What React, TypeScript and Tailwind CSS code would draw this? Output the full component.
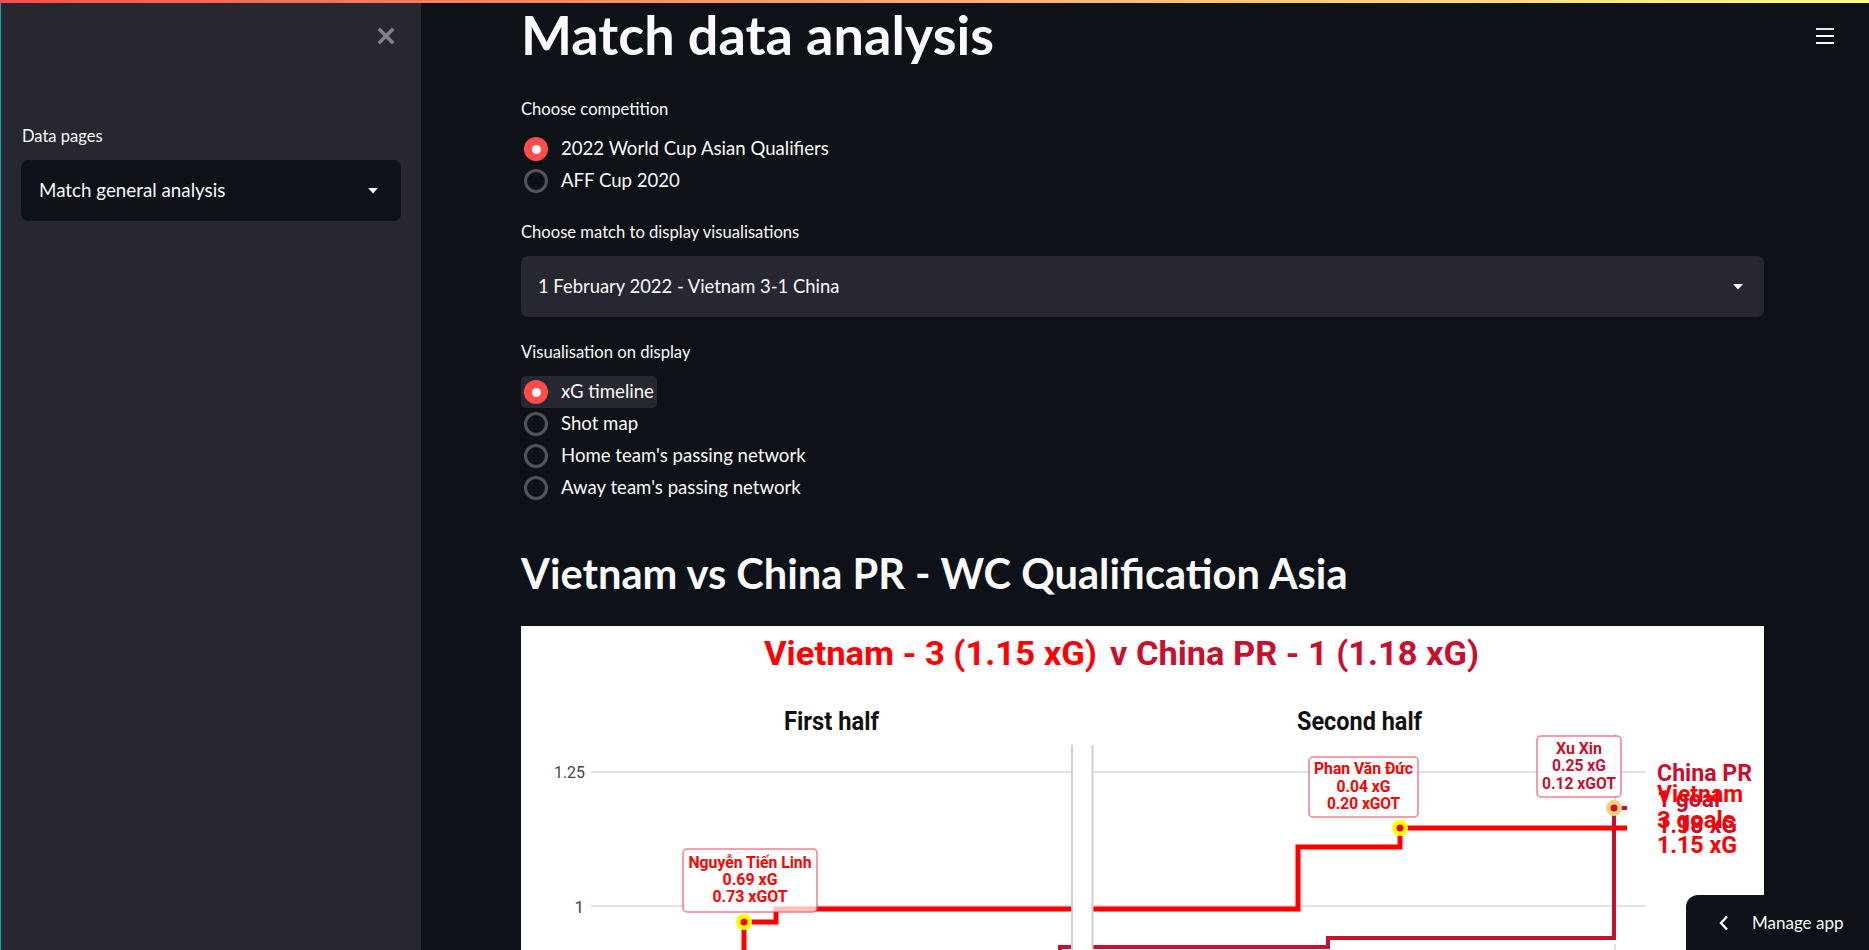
import React from "react";

function Caret() {
  return (
    <svg width="10" height="6" viewBox="0 0 10 6">
      <path d="M0 0 L10 0 L5 5.5 Z" fill="#fafafa" />
    </svg>
  );
}

function Radio({ label, checked = false, focused = false }: { label: string; checked?: boolean; focused?: boolean }) {
  return (
    <div className="h-8 flex items-center">
      <div className={focused ? "h-8 flex items-center pl-[3px] pr-[3px] rounded-[5px] bg-[#262730]" : "h-8 flex items-center pl-[3px] pr-[3px]"}>
        {checked ? (
          <span className="w-6 h-6 rounded-full bg-[#ff4b4b] flex items-center justify-center">
            <span className="w-[9px] h-[9px] rounded-full bg-white" />
          </span>
        ) : (
          <span className="w-6 h-6 rounded-full border-[3px] border-[#52545d]" />
        )}
        <span className="ml-[13px] text-[18.6px] text-[#fafafa]">{label}</span>
      </div>
    </div>
  );
}

function Chart() {
  const vn = "#ff0000";
  const cn = "#c8102e";
  const box = "rgba(235,40,60,0.6)";
  return (
    <div className="w-full h-[420px] bg-white">
      <svg width="1243" height="420" viewBox="0 0 1243 420" fontFamily="Roboto, sans-serif">
        <text x="243" y="39" fontSize="34" fontWeight="700" fill={vn} textLength="333" lengthAdjust="spacingAndGlyphs">Vietnam - 3 (1.15 xG)</text>
        <text x="589" y="39" fontSize="34" fontWeight="700" fill={cn} textLength="369" lengthAdjust="spacingAndGlyphs">v China PR - 1 (1.18 xG)</text>

        <text x="263" y="104" fontSize="25" fontWeight="700" fill="#111" textLength="95" lengthAdjust="spacingAndGlyphs">First half</text>
        <text x="776" y="104" fontSize="25" fontWeight="700" fill="#111" textLength="125" lengthAdjust="spacingAndGlyphs">Second half</text>

        <text x="64" y="152" fontSize="17" fill="#444" textAnchor="end" textLength="31" lengthAdjust="spacingAndGlyphs">1.25</text>
        <text x="63" y="287" fontSize="17" fill="#444" textAnchor="end">1</text>

        <line x1="70" y1="146" x2="1124" y2="146" stroke="#e2e2e2" strokeWidth="2" />
        <line x1="70" y1="280" x2="1124" y2="280" stroke="#e2e2e2" strokeWidth="2" />

        <line x1="1094" y1="108" x2="1094" y2="420" stroke="#dddddd" strokeWidth="2" strokeDasharray="6 4" />

        <path d="M539 420 L539 321 L807 321 L807 312 L1093 312 L1093 182 L1106 182" fill="none" stroke={cn} strokeWidth="4" />
        <path d="M223 420 L223 296 L255 296 L255 283 L777 283 L777 221 L879 221 L879 202 L1106 202" fill="none" stroke={vn} strokeWidth="5" />

        <rect x="552" y="119" width="19" height="301" fill="#ffffff" />
        <line x1="551" y1="119" x2="551" y2="420" stroke="#cfcfcf" strokeWidth="2" />
        <line x1="571.5" y1="119" x2="571.5" y2="420" stroke="#cfcfcf" strokeWidth="2" />

        <circle cx="223" cy="296" r="8" fill="#ffff00" />
        <circle cx="223" cy="296" r="3.5" fill={vn} />
        <circle cx="879" cy="202" r="8" fill="#ffff00" />
        <circle cx="879" cy="202" r="3.5" fill={vn} />
        <circle cx="1093" cy="182" r="8" fill="#f2d27a" />
        <circle cx="1093" cy="182" r="3.5" fill={cn} />

        <rect x="162" y="223" width="134" height="63" rx="4" fill="rgba(255,255,255,0.75)" stroke={box} strokeWidth="1.5" />
        <text x="229" y="242" fontSize="16" fontWeight="700" fill={vn} textAnchor="middle" textLength="123" lengthAdjust="spacingAndGlyphs">Nguyễn Tiến Linh</text>
        <text x="229" y="259" fontSize="16" fontWeight="700" fill={vn} textAnchor="middle" textLength="55" lengthAdjust="spacingAndGlyphs">0.69 xG</text>
        <text x="229" y="276" fontSize="16" fontWeight="700" fill={vn} textAnchor="middle" textLength="75" lengthAdjust="spacingAndGlyphs">0.73 xGOT</text>

        <rect x="788" y="131" width="109" height="60" rx="4" fill="rgba(255,255,255,0.75)" stroke={box} strokeWidth="1.5" />
        <text x="842.5" y="148" fontSize="16" fontWeight="700" fill={vn} textAnchor="middle" textLength="99" lengthAdjust="spacingAndGlyphs">Phan Văn Đức</text>
        <text x="842.5" y="166" fontSize="16" fontWeight="700" fill={vn} textAnchor="middle" textLength="54" lengthAdjust="spacingAndGlyphs">0.04 xG</text>
        <text x="842.5" y="183" fontSize="16" fontWeight="700" fill={vn} textAnchor="middle" textLength="73" lengthAdjust="spacingAndGlyphs">0.20 xGOT</text>

        <rect x="1016" y="110" width="84" height="61" rx="4" fill="rgba(255,255,255,0.75)" stroke={box} strokeWidth="1.5" />
        <text x="1058" y="128" fontSize="16" fontWeight="700" fill={cn} textAnchor="middle" textLength="46" lengthAdjust="spacingAndGlyphs">Xu Xin</text>
        <text x="1058" y="145" fontSize="16" fontWeight="700" fill={cn} textAnchor="middle" textLength="54" lengthAdjust="spacingAndGlyphs">0.25 xG</text>
        <text x="1058" y="163" fontSize="16" fontWeight="700" fill={cn} textAnchor="middle" textLength="74" lengthAdjust="spacingAndGlyphs">0.12 xGOT</text>

        <text x="1136" y="155" fontSize="24" fontWeight="700" fill={cn} textLength="95" lengthAdjust="spacingAndGlyphs">China PR</text>
        <text x="1136" y="181" fontSize="24" fontWeight="700" fill={cn} textLength="63" lengthAdjust="spacingAndGlyphs">1 goal</text>
        <text x="1136" y="207" fontSize="24" fontWeight="700" fill={cn} textLength="80" lengthAdjust="spacingAndGlyphs">1.18 xG</text>
        <text x="1136" y="176" fontSize="24" fontWeight="700" fill={vn} textLength="86" lengthAdjust="spacingAndGlyphs">Vietnam</text>
        <text x="1136" y="202" fontSize="24" fontWeight="700" fill={vn} textLength="78" lengthAdjust="spacingAndGlyphs">3 goals</text>
        <text x="1136" y="227" fontSize="24" fontWeight="700" fill={vn} textLength="80" lengthAdjust="spacingAndGlyphs">1.15 xG</text>
      </svg>
    </div>
  );
}

export default function App() {
  return (
    <div className="relative h-screen w-full overflow-hidden flex bg-[#0e1117] font-['Lato',sans-serif] text-[#fafafa]">
      <div className="absolute top-0 left-0 right-0 h-[3px] bg-linear-to-r from-[#ff4b4b] to-[#fffd80] z-20" />
      <div className="absolute top-0 left-0 bottom-0 w-px bg-[#10a2a4] z-10" />

      <aside className="w-[421px] shrink-0 h-full bg-[#262730] flex flex-col">
        <div className="flex justify-end pr-[26px] pt-[27px]">
          <svg width="18" height="18" viewBox="0 0 18 18">
            <path d="M3 3 L15 15 M15 3 L3 15" stroke="#808289" strokeWidth="3.6" strokeLinecap="square" />
          </svg>
        </div>
        <div className="pl-[22px] mt-[80px] text-[16.5px] leading-[22px]">Data pages</div>
        <div className="ml-[21px] mt-[13px] w-[380px] h-[61px] rounded-[7px] bg-[#0e1117] flex items-center justify-between pl-[18px] pr-[23px]">
          <span className="text-[18.8px]">Match general analysis</span>
          <Caret />
        </div>
      </aside>

      <main className="relative flex-1 h-full overflow-hidden pl-[100px] pr-[105px]">
        <div className="absolute top-[28px] right-[35px] flex flex-col gap-[5px]">
          <span className="block w-[18px] h-[2px] bg-[#e6e6e6]" />
          <span className="block w-[18px] h-[2px] bg-[#fafafa]" />
          <span className="block w-[18px] h-[2px] bg-[#fafafa]" />
        </div>

        <h1 className="mt-[2px] text-[54px] leading-[65px] font-bold">Match data analysis</h1>

        <div className="mt-[31px] text-[16.6px] leading-[22px]">Choose competition</div>
        <div className="mt-[13px] flex flex-col">
          <Radio label="2022 World Cup Asian Qualifiers" checked />
          <Radio label="AFF Cup 2020" />
        </div>

        <div className="mt-[24px] text-[16.6px] leading-[22px]">Choose match to display visualisations</div>
        <div className="mt-[13px] h-[61px] rounded-[7px] bg-[#262730] flex items-center justify-between pl-[17px] pr-[21px]">
          <span className="text-[18.4px]">1 February 2022 - Vietnam 3-1 China</span>
          <Caret />
        </div>

        <div className="mt-[24px] text-[16.6px] leading-[22px]">Visualisation on display</div>
        <div className="mt-[13px] flex flex-col">
          <Radio label="xG timeline" checked focused />
          <Radio label="Shot map" />
          <Radio label="Home team's passing network" />
          <Radio label="Away team's passing network" />
        </div>

        <h2 className="mt-[43px] text-[41.6px] leading-[53px] font-bold">Vietnam vs China PR - WC Qualification Asia</h2>

        <div className="mt-[26px]">
          <Chart />
        </div>
      </main>

      <div className="absolute bottom-0 right-0 w-[183px] h-[55px] bg-[#0e1117] rounded-tl-[12px] flex items-center z-30">
        <svg width="12" height="16" viewBox="0 0 12 16" className="ml-[32px]">
          <path d="M9 1.5 L3 8 L9 14.5" fill="none" stroke="#fafafa" strokeWidth="2.4" />
        </svg>
        <span className="ml-[22px] text-[17px]">Manage app</span>
      </div>
    </div>
  );
}
